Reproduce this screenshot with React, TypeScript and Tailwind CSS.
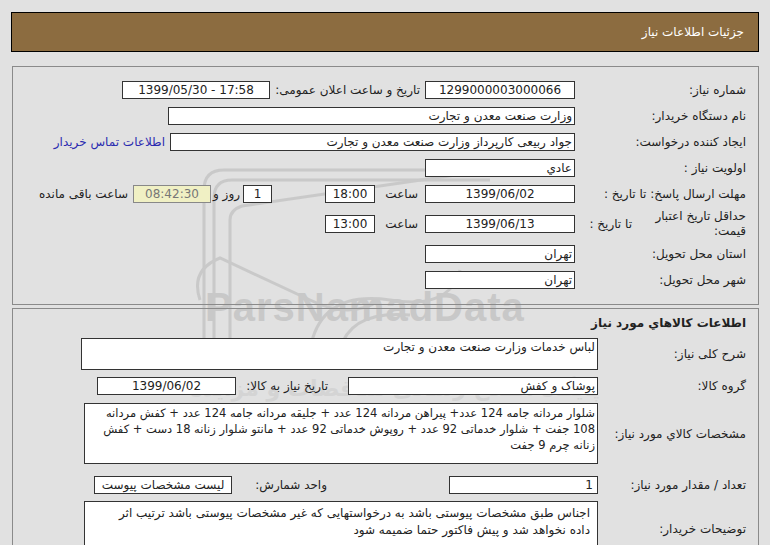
import React from 'react'

const font = { fontFamily: '"DejaVu Sans", "Noto Sans", sans-serif' }

const box = 'h-[18px] bg-white border border-[#333] text-[12px] leading-[16px] text-[#222] px-[2px] whitespace-nowrap overflow-hidden shrink-0'
const label = 'text-[12px] text-[#222] whitespace-nowrap shrink-0'

function Row({ children, className = '' }: { children: React.ReactNode; className?: string }) {
  return <div className={`flex items-center h-[26px] ${className}`}>{children}</div>
}

function Label1({ children }: { children: React.ReactNode }) {
  return <div className={`${label} w-[171px]`}>{children}</div>
}

function Label2({ children }: { children: React.ReactNode }) {
  return <div className={`${label} w-[148px]`}>{children}</div>
}

function Watermark() {
  return (
    <div className="absolute left-0 top-0 w-[770px] h-[545px] pointer-events-none overflow-hidden">
      <svg className="absolute left-[190px] top-[150px]" width="420" height="200" viewBox="0 0 420 200" fill="none" stroke="#c4c4c4" strokeWidth="3" opacity="0.8">
        <path d="M14 190 V40 Q14 20 34 20 H300" />
        <path d="M24 190 V48 Q24 30 42 30 H300" />
        <path d="M40 190 V70 Q40 60 52 56 L300 20" />
        <path d="M10 150 Q0 120 30 108 L120 150 Q160 170 190 150" />
        <path d="M120 200 Q130 140 200 150 Q260 160 270 120" />
        <path d="M150 200 Q160 160 220 165" />
      </svg>
      <div
        className="absolute left-[205px] top-[287px] text-[40px] font-bold text-[#c8c8c8] tracking-[1px] leading-none"
        style={{ fontFamily: '"Liberation Sans", Arial, sans-serif' }}
      >
        ParsNamadData
      </div>
      <div className="absolute left-[200px] top-[336px] text-[22px] text-[#d2d2d2] italic" dir="rtl" style={font}>
        سامانه تدارکات یارس نماد داده ها
      </div>
      <div className="absolute left-[190px] top-[372px] text-[22px] text-[#d4d4d4] font-bold" dir="rtl" style={font}>
        پایگاه اطلاع رسانی مناقصات و مزایده
      </div>
    </div>
  )
}

export default function App() {
  return (
    <div className="relative w-[770px] h-[545px] bg-[#e1e1e1] overflow-hidden" dir="rtl" style={font}>
      <Watermark />
      <div className="relative pt-[12px] px-[11px]">
        <div className="h-[40px] bg-[#8c6c40] border border-black flex items-center pr-[14px]">
          <span className="text-[12px] text-white">جزئیات اطلاعات نیاز</span>
        </div>

        <div className="mt-[14px] ml-[1px] h-[239px] border border-[#8a8a8a] pt-[10px] pr-[12px]">
          <Row>
            <Label1>شماره نیاز:</Label1>
            <div className={`${box} w-[150px] text-center`}>1299000003000066</div>
            <div className={`${label} w-[155px] pr-[5px]`}>تاریخ و ساعت اعلان عمومی:</div>
            <div className={`${box} w-[148px] text-center`} dir="ltr">1399/05/30 - 17:58</div>
          </Row>
          <Row>
            <Label1>نام دستگاه خریدار:</Label1>
            <div className={`${box} w-[407px]`}>وزارت صنعت معدن و تجارت</div>
          </Row>
          <Row>
            <Label1>ایجاد کننده درخواست:</Label1>
            <div className={`${box} w-[405px]`}>جواد ربیعی کارپرداز وزارت صنعت معدن و تجارت</div>
            <div className="text-[12px] text-[#2b2bb0] whitespace-nowrap pr-[5px]">اطلاعات تماس خریدار</div>
          </Row>
          <Row>
            <Label1>اولویت نیاز :</Label1>
            <div className={`${box} w-[150px]`}>عادي</div>
          </Row>
          <Row>
            <Label1>مهلت ارسال پاسخ: تا تاریخ :</Label1>
            <div className={`${box} w-[150px] text-center`}>1399/06/02</div>
            <div className={`${label} w-[50px] pr-[7px]`}>ساعت</div>
            <div className={`${box} w-[50px] text-center`}>18:00</div>
            <div className="w-[53px] shrink-0" />
            <div className={`${box} w-[29px] text-center`}>1</div>
            <div className={`${label} w-[32px] pr-[3px]`}>روز و</div>
            <div className="h-[18px] w-[78px] shrink-0 bg-[#f0f0c4] border border-[#888] text-[12px] leading-[16px] text-[#777] text-center">08:42:30</div>
            <div className={`${label} pr-[5px]`}>ساعت باقی مانده</div>
          </Row>
          <div className="flex items-center h-[34px]">
            <div className="flex items-center w-[171px] shrink-0">
              <div className="w-[112px] shrink-0 text-[12px] leading-[15px] text-[#222]">حداقل تاریخ اعتبار قیمت:</div>
              <div className={`${label} pr-[2px]`}>تا تاریخ :</div>
            </div>
            <div className={`${box} w-[150px] text-center`}>1399/06/13</div>
            <div className={`${label} w-[50px] pr-[7px]`}>ساعت</div>
            <div className={`${box} w-[50px] text-center`}>13:00</div>
          </div>
          <Row>
            <Label1>استان محل تحویل:</Label1>
            <div className={`${box} w-[150px]`}>تهران</div>
          </Row>
          <Row>
            <Label1>شهر محل تحویل:</Label1>
            <div className={`${box} w-[150px]`}>تهران</div>
          </Row>
        </div>

        <div className="mt-[3px] ml-[1px] h-[260px] border border-[#8a8a8a] pt-[4px] pr-[12px]">
          <div className="text-[12px] font-bold text-[#222] h-[20px] leading-[20px]">اطلاعات كالاهاي مورد نیاز</div>
          <div className="flex items-center h-[34px] mt-[4px]">
            <Label2>شرح کلی نیاز:</Label2>
            <div className="h-[32px] w-[517px] shrink-0 bg-white border border-[#333] text-[12px] leading-[16px] text-[#222] px-[2px]">
              لباس خدمات وزارت صنعت معدن و تجارت
            </div>
          </div>
          <Row className="mt-[2px]">
            <Label2>گروه کالا:</Label2>
            <div className={`${box} w-[250px]`}>پوشاک و کفش</div>
            <div className={`${label} w-[112px] pr-[20px]`}>تاریخ نیاز به کالا:</div>
            <div className={`${box} w-[139px] text-center`}>1399/06/02</div>
          </Row>
          <div className="flex items-center h-[63px] mt-[3px]">
            <Label2>مشخصات کالاي مورد نیاز:</Label2>
            <div className="h-[61px] w-[514px] shrink-0 bg-white border border-[#333] text-[11.5px] leading-[16px] text-[#222] px-[2px] pt-[1px] overflow-hidden">
              <div className="whitespace-nowrap">شلوار مردانه جامه 124 عدد+ پیراهن مردانه 124 عدد + جلیقه مردانه جامه 124 عدد + کفش مردانه</div>
              <div className="whitespace-nowrap">108 جفت + شلوار خدماتی 92 عدد + روپوش خدماتی 92 عدد + مانتو شلوار زنانه 18 دست + کفش</div>
              <div className="whitespace-nowrap">زنانه چرم  9 جفت</div>
            </div>
          </div>
          <Row className="mt-[7px]">
            <Label2>تعداد / مقدار مورد نیاز:</Label2>
            <div className={`${box} w-[149px] pr-[4px]`}>1</div>
            <div className={`${label} w-[217px] pr-[122px]`}>واحد شمارش:</div>
            <div className={`${box} w-[138px] text-center`}>لیست مشخصات پیوست</div>
          </Row>
          <div className="flex mt-[3px]">
            <div className={`${label} w-[148px] pt-[19px]`}>توضیحات خریدار:</div>
            <div className="h-[60px] w-[514px] shrink-0 bg-white border border-[#333] text-[12px] leading-[17px] text-[#222] pr-[7px] pt-[3px]">
              <div className="whitespace-nowrap">اجناس طبق مشخصات پیوستی باشد به درخواستهایی که غیر مشخصات پیوستی باشد ترتیب اثر</div>
              <div className="whitespace-nowrap">داده نخواهد شد و پیش فاکتور حتما ضمیمه شود</div>
            </div>
          </div>
        </div>
      </div>
    </div>
  )
}
